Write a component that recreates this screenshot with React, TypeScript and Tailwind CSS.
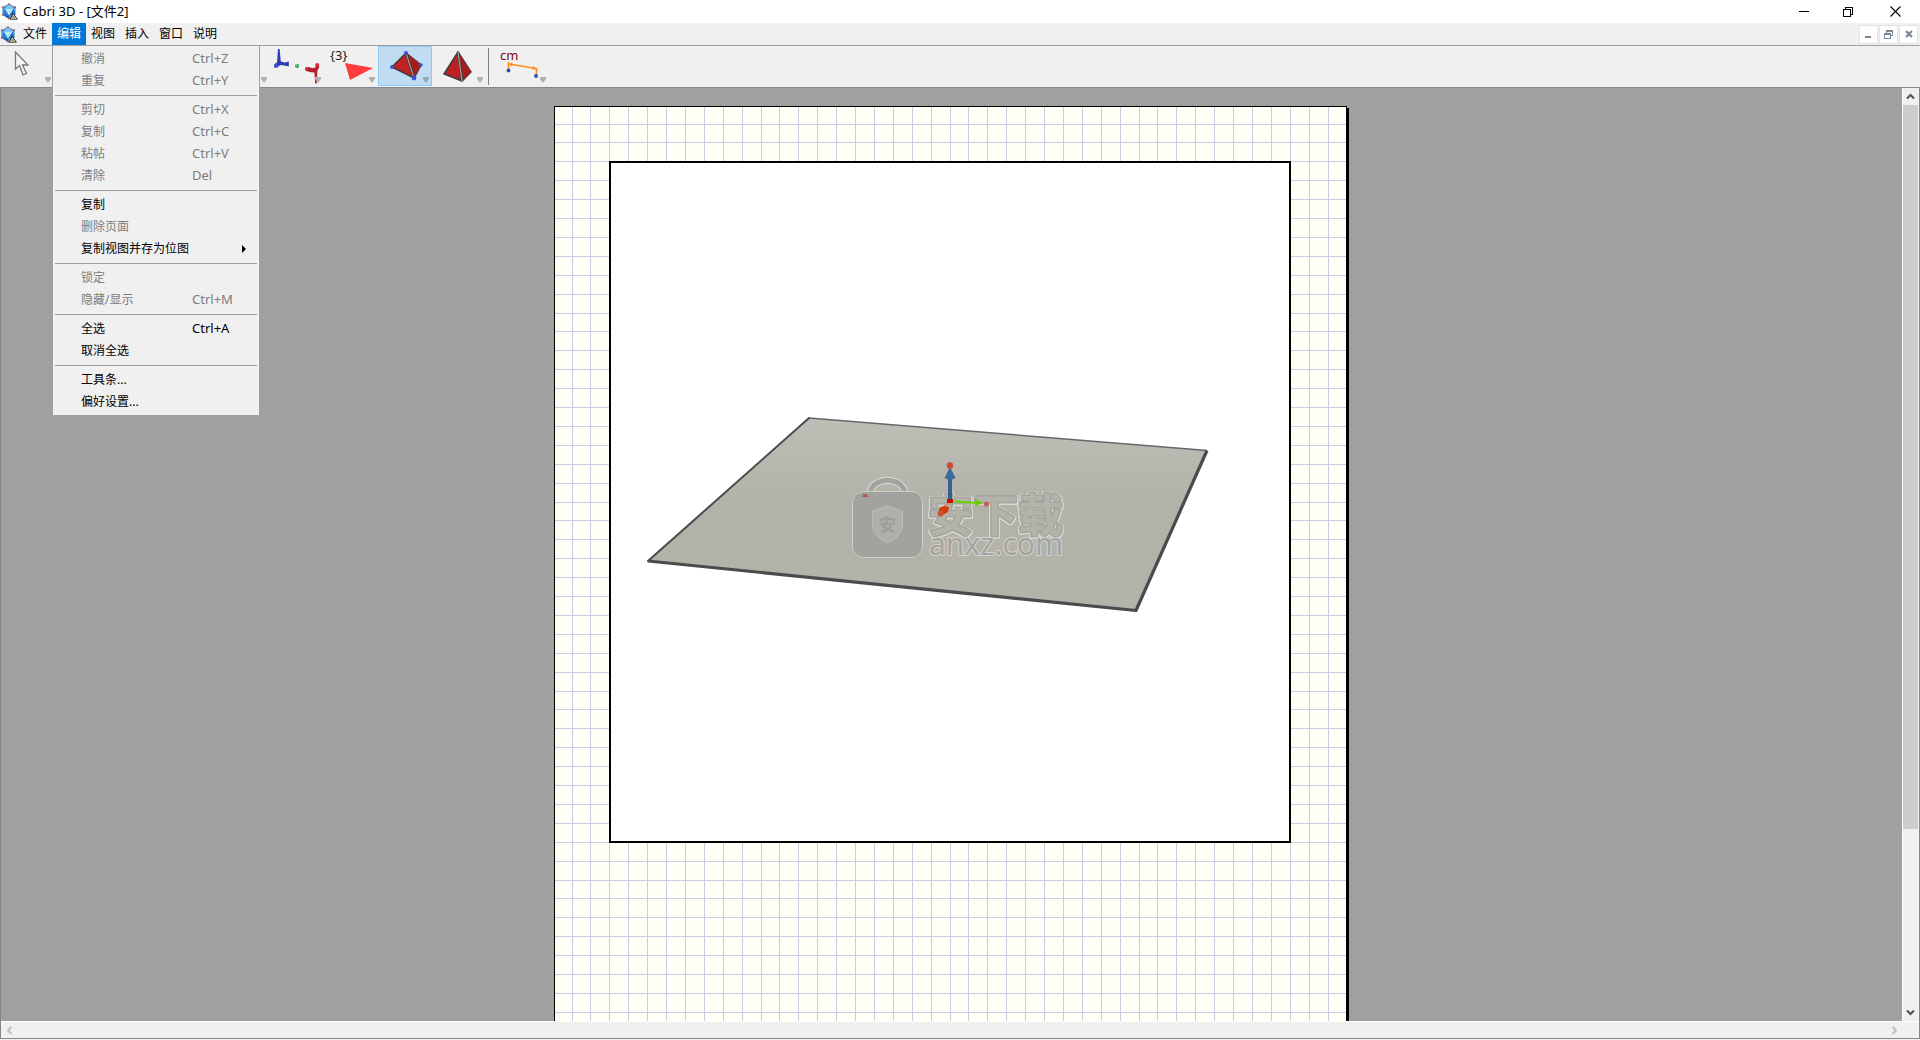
import { ReactNode } from "react";

interface MenuEntry {
  label: string;
  shortcut?: string;
  disabled?: boolean;
  submenu?: boolean;
}

const MENUS = ["文件", "编辑", "视图", "插入", "窗口", "说明"];

const EDIT_MENU: MenuEntry[][] = [
  [
    { label: "撤消", shortcut: "Ctrl+Z", disabled: true },
    { label: "重复", shortcut: "Ctrl+Y", disabled: true },
  ],
  [
    { label: "剪切", shortcut: "Ctrl+X", disabled: true },
    { label: "复制", shortcut: "Ctrl+C", disabled: true },
    { label: "粘帖", shortcut: "Ctrl+V", disabled: true },
    { label: "清除", shortcut: "Del", disabled: true },
  ],
  [
    { label: "复制" },
    { label: "删除页面", disabled: true },
    { label: "复制视图并存为位图", submenu: true },
  ],
  [
    { label: "锁定", disabled: true },
    { label: "隐藏/显示", shortcut: "Ctrl+M", disabled: true },
  ],
  [{ label: "全选", shortcut: "Ctrl+A" }, { label: "取消全选" }],
  [{ label: "工具条..." }, { label: "偏好设置..." }],
];

// Half a centimetre at 96 dpi
const GRID_STEP = 18.9;

function AppIcon() {
  return (
    <svg width="17" height="17" viewBox="0 0 16 16" aria-hidden="true">
      <path d="M7.5 1 13.4 4v7.2l-5.9 3.6L1.6 11V4z" fill="#3f9be4" stroke="#5f9fd0" strokeWidth=".7" />
      <path d="M7.5 1 12 5.5H3.5z" fill="#7cc4f5" />
      <path d="M3.5 5.5H12L7.5 12z" fill="#b9e6fd" />
      <path d="M3.5 5.5 7.5 12 1.6 11z" fill="#2c7fd2" />
      <path d="M12 5.5 7.5 12l5.9-.8z" fill="#1f6cc0" />
      <path d="M1.6 11 7.5 12v2.8z" fill="#1a55a3" />
      <circle cx="7.5" cy="1.2" r=".9" fill="#c94a3c" />
      <circle cx="1.6" cy="4" r=".9" fill="#c94a3c" />
      <circle cx="13.4" cy="4" r=".9" fill="#c94a3c" />
      <circle cx="1.6" cy="11" r=".9" fill="#c94a3c" />
      <circle cx="7.5" cy="14.6" r=".9" fill="#c94a3c" />
      <path d="M8.5 15.2 11.4 10l4 5.2z" fill="#f7efc4" stroke="#222" strokeWidth=".9" />
      <path d="M10.5 13.2h2.6" stroke="#222" strokeWidth=".8" />
    </svg>
  );
}

function CursorIcon() {
  return (
    <svg width="54" height="40" viewBox="0 0 54 40" aria-hidden="true">
      <path d="M15.5 6v17l4-3.5 3.5 9.5 3.5-1.5-4-8.5h5.5z" fill="#f4f4f4" stroke="#777" strokeWidth="1.3" />
    </svg>
  );
}

function TransformIcon() {
  return (
    <svg width="54" height="40" viewBox="0 0 54 40" aria-hidden="true">
      <path d="M8 3h1.6l1.2 12.5 4 .9 4-1v5l-4.5-.8-4-.6-3 2.5-3 .2-.2-2.7 3-3z" fill="#2b3cb4" />
      <circle cx="6" cy="19.5" r="2" fill="#3f55d8" />
      <circle cx="27" cy="20" r="2.1" fill="#36a44a" />
      <circle cx="26.4" cy="19.4" r=".8" fill="#90e09a" />
      <path
        d="m35.500 22 3-1 4 1.200 3-.8.7-3.400 2.600-.4.500 3.500-1.800 3.500-.3 4-.4 9h-1.600l-.8-11-3.400-.4-5-1.200z"
        fill="#b3202a"
      />
      <circle cx="47" cy="19" r="1.9" fill="#e0303a" />
      <ellipse cx="36.500" cy="23" rx="1.500" ry="1.900" fill="#d42a34" />
    </svg>
  );
}

function PolygonIcon() {
  return (
    <svg width="54" height="40" viewBox="0 0 54 40" aria-hidden="true">
      <path d="m21 17 28 5-23 12z" fill="#ff3c3c" />
      <text x="6" y="14" fontSize="13" fill="#222">
        {"{3}"}
      </text>
    </svg>
  );
}

function PolyhedronIcon() {
  return (
    <svg width="54" height="40" viewBox="0 0 54 40" aria-hidden="true">
      <path d="m28 7 15 12-7 13-22-11z" fill="#c32222" stroke="#3d3d3d" strokeWidth="1.6" />
      <path d="m28 7 15 12-7 13z" fill="#a81c1c" />
      <path d="m28 7 8 25" stroke="#444" strokeWidth="2.6" />
      <path d="m28 7 8 25" stroke="#aaa" strokeWidth="1" />
      <circle cx="28" cy="7" r="2" fill="#3b52d4" />
      <circle cx="43" cy="19" r="1.8" fill="#3b52d4" />
      <circle cx="36" cy="32" r="2.4" fill="#3b52d4" />
      <circle cx="14" cy="21" r="1.9" fill="#3b52d4" />
    </svg>
  );
}

function TetrahedronIcon() {
  return (
    <svg width="54" height="40" viewBox="0 0 54 40" aria-hidden="true">
      <path d="m26 6 13 20-9 9-18-7z" fill="#bf2020" stroke="#3d3d3d" strokeWidth="1.5" />
      <path d="m26 6 13 20-9 9z" fill="#a81c1c" />
      <path d="m26 6 4 29" stroke="#444" strokeWidth="2.6" />
      <path d="m26 6 4 29" stroke="#aaa" strokeWidth="1" />
    </svg>
  );
}

function MeasureIcon() {
  return (
    <svg width="59" height="40" viewBox="0 0 59 40" aria-hidden="true">
      <text x="10" y="14" fontSize="13" fill="#7c0a12">
        cm
      </text>
      <path d="M18.5 24v-8M46.5 30v-8M19 18l27 4.5" stroke="#ff8c14" strokeWidth="1.7" fill="none" />
      <path d="m18.5 18 4-1.5-.5 4zM46.5 22.5l-4 1.5.6-4z" fill="#ff8c14" />
      <circle cx="18.5" cy="24.5" r="1.9" fill="#3348b8" />
      <circle cx="46" cy="30" r="1.9" fill="#3348b8" />
    </svg>
  );
}

function ToolButton({
  label,
  active = false,
  className = "w-[54px]",
  children,
}: {
  label: string;
  active?: boolean;
  className?: string;
  children?: ReactNode;
}) {
  return (
    <button
      type="button"
      aria-label={label}
      aria-pressed={active}
      className={`relative h-10 shrink-0 ${active ? "bg-[#c0dcf3] outline outline-1 -outline-offset-1 outline-[#90c8f6]" : ""} ${className}`}
    >
      {children}
      <svg
        width="8"
        height="6"
        viewBox="0 0 8 6"
        className="absolute right-[2px] bottom-[3px]"
        aria-hidden="true"
      >
        <path d="M1 0h6v2L4 6 1 2z" fill={active ? "#93a7b8" : "#b0b0b0"} />
      </svg>
    </button>
  );
}

function TitleBar() {
  return (
    <header className="flex h-[23px] shrink-0 items-center bg-white pl-px">
      <AppIcon />
      <h1 className="ml-[5px] flex-1 text-[13px]">Cabri 3D - [文件2]</h1>
      <button type="button" aria-label="最小化" className="flex h-full w-[45px] items-center justify-center">
        <svg width="10" height="11" viewBox="0 0 10 11" shapeRendering="crispEdges">
          <path d="M0 5.5h10" stroke="#000" />
        </svg>
      </button>
      <button type="button" aria-label="还原" className="flex h-full w-11 items-center justify-center">
        <svg width="10" height="10" viewBox="0 0 10 10" shapeRendering="crispEdges">
          <path d="M.5 2.5h7v7h-7zM2.5 2.500v-2h7v7h-2" fill="none" stroke="#000" />
        </svg>
      </button>
      <button type="button" aria-label="关闭" className="flex h-full w-[50px] items-center justify-center">
        <svg width="11" height="11" viewBox="0 0 11 11">
          <path d="m.5.5 10 10M10.5.5l-10 10" stroke="#000" strokeWidth="1.1" />
        </svg>
      </button>
    </header>
  );
}

function EditMenu() {
  return (
    <div
      role="menu"
      aria-label="编辑"
      className="absolute top-full left-0 z-10 w-52 border border-[#a0a0a0] bg-[#f0f0f0] py-[2px] text-black"
    >
      {EDIT_MENU.map((group, i) => (
        <div key={i} role="group">
          {i > 0 && <div className="mx-[2px] my-[3px] h-px bg-[#a0a0a0]" />}
          {group.map((item) => (
            <button
              key={item.label}
              type="button"
              role="menuitem"
              disabled={item.disabled}
              className="flex h-[22px] w-full items-center pr-[13px] pl-7 text-left whitespace-nowrap disabled:text-[#7d7d7d]"
            >
              <span className={item.submenu ? "flex-1" : "w-[111px]"}>{item.label}</span>
              {item.shortcut && <span className="text-[13px]">{item.shortcut}</span>}
              {item.submenu && (
                <svg width="4" height="8" viewBox="0 0 4 8" aria-hidden="true">
                  <path d="M0 0v8l4-4z" />
                </svg>
              )}
            </button>
          ))}
        </div>
      ))}
    </div>
  );
}

function MenuBar() {
  return (
    <div className="flex h-[23px] shrink-0 border-b border-[#a0a0a0] bg-[#f0f0f0]">
      <div className="flex w-[18px] items-center">
        <AppIcon />
      </div>
      <nav className="flex flex-1">
        {MENUS.map((name) => (
          <div key={name} className="relative">
            <button
              type="button"
              aria-haspopup="menu"
              className={`h-full px-[5px] ${name === "编辑" ? "bg-[#0078d7] text-white" : ""}`}
            >
              {name}
            </button>
            {name === "编辑" && <EditMenu />}
          </div>
        ))}
      </nav>
      <div className="flex items-center gap-px pr-[2px] text-[#7b8797]">
        <button type="button" aria-label="最小化文档" className="flex size-[19px] items-center justify-center border border-[#e3e3e3] bg-white">
          <svg width="7" height="8" viewBox="0 0 7 8" shapeRendering="crispEdges">
            <path d="M0 6h6v2H0z" fill="currentColor" />
          </svg>
        </button>
        <button type="button" aria-label="还原文档" className="flex size-[19px] items-center justify-center border border-[#e3e3e3] bg-white">
          <svg width="9" height="9" viewBox="0 0 9 9" shapeRendering="crispEdges">
            <path d="M2 0h7v6H7V5h1V2H3v1H2zM0 3h7v6H0zM1 5v3h5V5z" fill="currentColor" fillRule="evenodd" />
          </svg>
        </button>
        <button type="button" aria-label="关闭文档" className="flex size-[19px] items-center justify-center border border-[#e3e3e3] bg-white">
          <svg width="8" height="8" viewBox="0 0 8 8">
            <path d="m1 1 6 6M7 1 1 7" stroke="currentColor" strokeWidth="2.2" />
          </svg>
        </button>
      </div>
    </div>
  );
}

function ToolBar() {
  return (
    <div role="toolbar" className="flex h-[41px] shrink-0 bg-[#f0f0f0]">
      <ToolButton label="操作">
        <CursorIcon />
      </ToolButton>
      <ToolButton label="点" />
      <ToolButton label="直线" />
      <ToolButton label="平面" />
      <ToolButton label="垂直" />
      <ToolButton label="变换">
        <TransformIcon />
      </ToolButton>
      <ToolButton label="多边形">
        <PolygonIcon />
      </ToolButton>
      <ToolButton label="多面体" active>
        <PolyhedronIcon />
      </ToolButton>
      <ToolButton label="正多面体">
        <TetrahedronIcon />
      </ToolButton>
      <div className="my-[2px] mr-px ml-[2px] w-px bg-[#808080]" />
      <ToolButton label="测量" className="w-[59px]">
        <MeasureIcon />
      </ToolButton>
    </div>
  );
}

function PageGrid() {
  const columns = Array.from({ length: 42 }, (_, i) => Math.floor(17 + i * GRID_STEP));
  const rows = Array.from({ length: 59 }, (_, i) => Math.floor(17 + i * GRID_STEP));
  return (
    <svg
      className="absolute inset-0 size-full"
      stroke="#cbcbe4"
      shapeRendering="crispEdges"
      aria-hidden="true"
    >
      {columns.map((x) => (
        <line key={x} x1={x + 0.5} x2={x + 0.5} y1="0" y2="100%" />
      ))}
      {rows.map((y) => (
        <line key={y} y1={y + 0.5} y2={y + 0.5} x1="0" x2="100%" />
      ))}
    </svg>
  );
}

function Watermark() {
  return (
    <g>
      <path d="M259 330c3-17 32-17 35 0" fill="none" stroke="#dcdcd6" strokeWidth="7" />
      <path d="M259 330c3-17 32-17 35 0" fill="none" stroke="#a2a29e" strokeWidth="5" />
      <rect x="241.5" y="328.5" width="70" height="66" rx="11" fill="#a2a29e" stroke="#cfcfc8" />
      <path d="m276.5 343 15 5v14c0 9-7 14-15 18-8-4-15-9-15-18v-14z" fill="#b0b0ab" stroke="#bcbcb7" />
      <text x="276.5" y="368" textAnchor="middle" fontSize="17" fontWeight="700" fill="#9d9d99">
        安
      </text>
      <text
        x="317"
        y="369"
        fontSize="45"
        fontWeight="700"
        strokeLinejoin="round"
        paintOrder="stroke"
        fill="#b3b3aa"
        stroke="#a4a4a0"
        strokeWidth="3"
        className="[filter:drop-shadow(1px_0_0_#dcdcd6)_drop-shadow(-1px_0_0_#dcdcd6)_drop-shadow(0_1px_0_#dcdcd6)]"
      >
        安下载
      </text>
      <text
        x="318"
        y="392"
        fontSize="30"
        fill="#a4a4a0"
        stroke="#d3d3cd"
        strokeWidth="2"
        paintOrder="stroke"
      >
        anxz.com
      </text>
    </g>
  );
}

function PlaneView() {
  return (
    <svg viewBox="0 0 678 678" className="block size-full" aria-label="三维视图" role="img">
      <defs>
        <linearGradient id="plane" x1="0" y1="0" x2="0" y2="1">
          <stop offset="0" stopColor="#bebeb7" />
          <stop offset=".45" stopColor="#b2b2a8" />
          <stop offset="1" stopColor="#b3b3ab" />
        </linearGradient>
      </defs>
      <path d="M198 255 596 287.5 525 447.5 37 398z" fill="url(#plane)" />
      <path d="M198 255 596 287.5" stroke="#66666a" strokeWidth="1.5" />
      <path d="M198 255 37 398" stroke="#4a4a4c" strokeWidth="2" strokeLinecap="round" />
      <path d="M596 287.5 525 447.5 37 398" fill="none" stroke="#4b4b4d" strokeWidth="3.2" strokeLinejoin="round" />
      <Watermark />
      <path d="m251 334 1.5-3h3l2.5 3z" fill="#b45a55" />
      <path d="M339 338V310" stroke="#33628f" strokeWidth="4" />
      <path d="m333.5 315 5.5-11 5.5 11q-5.5 3-11 0z" fill="#3a6c9c" />
      <circle cx="339" cy="302.5" r="3.2" fill="#cc4a36" />
      <path d="m343 338.5 24 1.5" stroke="#6ad400" strokeWidth="2.2" />
      <path d="m364 336 8 4-8 3z" fill="#66cc00" />
      <circle cx="375.5" cy="341" r="2.6" fill="#c2615a" />
      <path d="m338 340-6 5" stroke="#d98a70" strokeWidth="2" />
      <path d="m328 345 5-2 5 1-1 5-5 3-4-1z" fill="#d83c06" />
      <circle cx="329.5" cy="350.5" r="3" fill="#cd5136" />
      <path d="M336 336h6v4h-6z" fill="#cc0a0a" />
    </svg>
  );
}

function Workspace() {
  return (
    <main className="min-w-0 flex-1 overflow-hidden bg-[#a0a0a0] pt-[18px]">
      <div className="flex justify-center pr-[2px]">
        <div className="relative h-[1123px] w-[793px] shrink-0 border border-black bg-[#fffff5] pt-[54px] pl-[54px] shadow-[2px_2px_0_#000]">
          <PageGrid />
          <div className="relative size-[682px] border-2 border-black bg-white">
            <PlaneView />
          </div>
        </div>
      </div>
    </main>
  );
}

function Chevron({ d, color }: { d: string; color: string }) {
  return (
    <svg width="9" height="9" viewBox="0 0 9 9" aria-hidden="true">
      <path d={d} fill="none" stroke={color} strokeWidth="2" />
    </svg>
  );
}

function VerticalScroll() {
  return (
    <div className="flex w-[17px] shrink-0 flex-col border-x border-l-white border-r-[#f0f0f0] bg-[#f0f0f0]">
      <button type="button" aria-label="向上滚动" className="flex h-[17px] items-center justify-center">
        <Chevron d="m1 6.5 3.5-3.5L8 6.5" color="#505050" />
      </button>
      <div className="flex-33 bg-[#cdcdcd]" />
      <div className="flex-8" />
      <button type="button" aria-label="向下滚动" className="flex h-[17px] items-center justify-center">
        <Chevron d="m1 2.5 3.5 3.5L8 2.5" color="#505050" />
      </button>
    </div>
  );
}

function HorizontalScroll() {
  return (
    <div className="flex h-[17px] shrink-0 items-center justify-between border-t border-white bg-[#f0f0f0] pr-5 pl-1">
      <button type="button" aria-label="向左滚动">
        <Chevron d="M6.5 1 3 4.5 6.5 8" color="#bfbfbf" />
      </button>
      <button type="button" aria-label="向右滚动">
        <Chevron d="m2.5 1 3.5 3.5L2.5 8" color="#bfbfbf" />
      </button>
    </div>
  );
}

export default function App() {
  return (
    <div className="flex h-screen flex-col overflow-hidden bg-[#f0f0f0] pb-px font-['Noto_Sans','Noto_Sans_CJK_SC',sans-serif] text-xs text-black">
      <TitleBar />
      <MenuBar />
      <ToolBar />
      <div className="flex min-h-0 flex-1 flex-col border border-[#828790]">
        <div className="flex min-h-0 flex-1">
          <Workspace />
          <VerticalScroll />
        </div>
        <HorizontalScroll />
      </div>
    </div>
  );
}
